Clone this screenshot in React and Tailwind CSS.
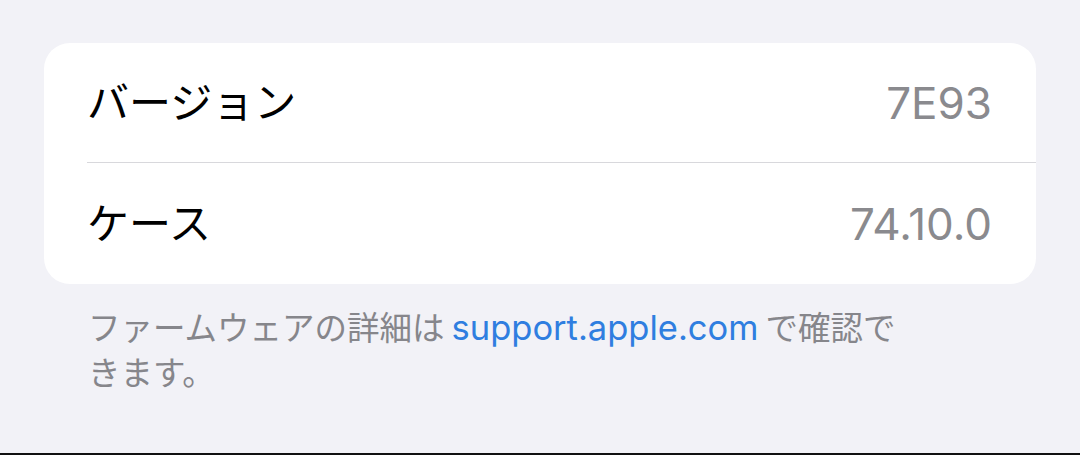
export default function App() {
  const font = { fontFamily: '"Inter", "Noto Sans CJK JP", sans-serif' };
  return (
    <div className="w-[1080px] h-[455px] bg-[#f2f2f7] flex flex-col overflow-hidden" style={font}>
      <div className="flex-1 flex flex-col px-[44px] pt-[43px]">
        <div className="bg-white rounded-[26px] flex flex-col">
          <div className="h-[120px] ml-[43px] pr-[44px] flex items-center justify-between border-b border-[#d8d8dc]">
            <span className="text-[42px] text-black leading-none">バージョン</span>
            <span className="text-[44px] text-[#8a8a8e] leading-none">7E93</span>
          </div>
          <div className="h-[121px] ml-[43px] pr-[44px] flex items-center justify-between">
            <span className="text-[42px] text-black leading-none">ケース</span>
            <span className="text-[44px] text-[#8a8a8e] leading-none">74.10.0</span>
          </div>
        </div>
        <p className="mt-[21px] pl-[44px] text-[32.5px] leading-[45px] text-[#86868b]">
          ファームウェアの詳細は<span className="text-[#2f7ee0] text-[34.5px] mx-[7px]">support.apple.com</span>で確認で
          <br />
          きます。
        </p>
      </div>
      <div className="h-[2px] bg-[#111]" />
    </div>
  );
}
